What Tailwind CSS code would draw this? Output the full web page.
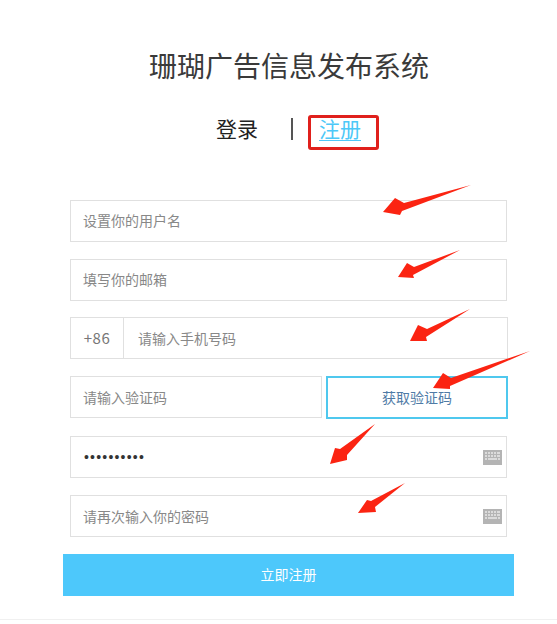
<!DOCTYPE html>
<html lang="zh">
<head>
<meta charset="UTF-8"/>
<title>注册</title>
<script src="https://cdn.jsdelivr.net/npm/@tailwindcss/browser@4"></script>
</head>
<body class="bg-white font-['Noto_Sans_CJK_SC','Noto_Sans',sans-serif]">
<div class="relative w-[557px] h-[624px] overflow-hidden">
    <main class="w-[557px] h-[620px] border-b border-[#f0f0f0] pt-[45px]">
        <h1 class="pl-[21px] text-center text-[28px] leading-[40px] font-normal text-[#3a3a3a]">珊瑚广告信息发布系统</h1>

        <div class="flex items-center mt-[25px] ml-[216px] h-[36px] text-[21px] leading-[36px]">
            <a class="w-[42px] text-[#222]">登录</a>
            <span class="ml-[33px] mt-[2px] w-[2px] h-[22px] bg-[#555]"></span>
            <a class="ml-[26px] text-[#4dc8f8] underline underline-offset-[3px] decoration-1">注册</a>
        </div>

        <form class="flex flex-col mt-[54px] ml-[63px] w-[451px]">
            <div class="ml-[7px] w-[437px] h-[42px] border border-[#e0e0e0]">
                <input class="w-full h-full px-[12px] pb-[2px] text-[14px] outline-none placeholder:text-[#888]" placeholder="设置你的用户名"/>
            </div>
            <div class="ml-[7px] mt-[17px] w-[437px] h-[42px] border border-[#e0e0e0]">
                <input class="w-full h-full px-[12px] pb-[2px] text-[14px] outline-none placeholder:text-[#888]" placeholder="填写你的邮箱"/>
            </div>
            <div class="flex ml-[7px] mt-[16px] w-[438px] h-[42px] border border-[#e0e0e0]">
                <span class="flex items-center justify-center w-[53px] border-r border-[#e0e0e0] text-[15px] text-[#777] tracking-[0.5px]">+86</span>
                <input class="flex-1 min-w-0 px-[14px] text-[14px] outline-none placeholder:text-[#888]" placeholder="请输入手机号码"/>
            </div>
            <div class="flex ml-[7px] mt-[17px] w-[438px] h-[43px]">
                <div class="w-[252px] h-[42px] border border-[#e0e0e0]">
                    <input class="w-full h-full px-[12px] text-[14px] outline-none placeholder:text-[#888]" placeholder="请输入验证码"/>
                </div>
                <button type="button" class="ml-[4px] w-[182px] h-[43px] border-2 border-[#4fc8ee] text-[14px] text-[#4f7ba6]">获取验证码</button>
            </div>
            <div class="relative ml-[7px] mt-[17px] w-[437px] h-[42px] border border-[#e0e0e0]">
                <input type="password" value="1234567890" class="w-full h-full pl-[13px] pr-[40px] font-['Liberation_Sans',sans-serif] text-[14px] tracking-[1.2px] text-[#333] outline-none"/>
                <svg class="absolute right-[4px] top-[13px]" width="19" height="15" viewBox="0 0 19 15">
                    <rect width="19" height="15" fill="#b4b4b4"/>
                    <path d="M2 3h2M5 3h2M8 3h2M11 3h2M14 3h3M2 6h2M5 6h2M8 6h2M11 6h2M14 6h3M2 9h2M5 9h9M15 9h2" stroke="#e8e8e8" stroke-width="1.4"/>
                </svg>
            </div>
            <div class="relative ml-[7px] mt-[17px] w-[437px] h-[42px] border border-[#e0e0e0]">
                <input class="w-full h-full pl-[12px] pr-[40px] text-[14px] outline-none placeholder:text-[#888]" placeholder="请再次输入你的密码"/>
                <svg class="absolute right-[4px] top-[13px]" width="19" height="15" viewBox="0 0 19 15">
                    <rect width="19" height="15" fill="#b4b4b4"/>
                    <path d="M2 3h2M5 3h2M8 3h2M11 3h2M14 3h3M2 6h2M5 6h2M8 6h2M11 6h2M14 6h3M2 9h2M5 9h9M15 9h2" stroke="#e8e8e8" stroke-width="1.4"/>
                </svg>
            </div>
            <button type="button" class="mt-[17px] pb-[2px] w-[451px] h-[42px] bg-[#4dc8fb] text-white text-[14px]">立即注册</button>
        </form>
    </main>

    <!-- 标注：红框和箭头 -->
    <div class="absolute left-[308px] top-[115px] w-[71px] h-[35px] border-[3px] border-[#e0201c] rounded-[3px]"></div>
    <svg class="absolute left-0 top-0 pointer-events-none" width="557" height="624" viewBox="0 0 557 624">
        <g fill="#fb2412">
            <polygon points="471,185 404,203 395,198 383,212 400,215 402,211"/>
            <polygon points="460,250 414,267 407,263 398,277 414,278 413,275"/>
            <polygon points="470,309 427,329 418,325 410,341 427,341 426,337"/>
            <polygon points="530,351 451,378 443,373 433,388 450,389 450,386"/>
            <polygon points="375,424 340,449 335,448 330,464 347,460 347,455"/>
            <polygon points="405,483 371,501 367,500 358,513 376,512 375,507"/>
        </g>
    </svg>
</div>
</body>
</html>
